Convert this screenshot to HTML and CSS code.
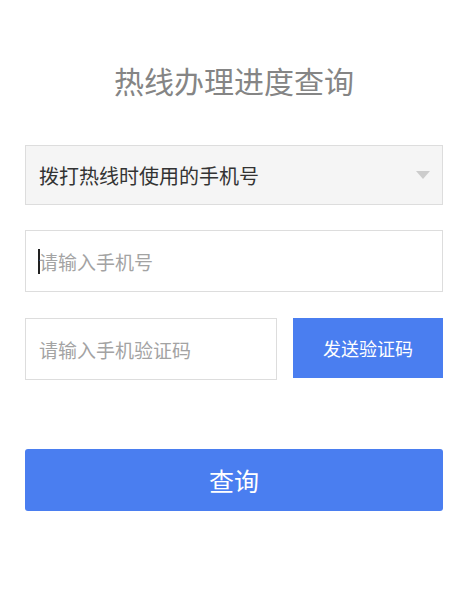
FILE: index.html
```html
<!DOCTYPE html>
<html lang="zh-CN">
<head>
<meta charset="utf-8">
<title>热线办理进度查询</title>
<link rel="stylesheet" href="styles.css">
</head>
<body>
<main class="page">
  <h1 class="title">热线办理进度查询</h1>
  <div class="field select">
    <span class="select-text">拨打热线时使用的手机号</span>
    <span class="arrow"></span>
  </div>
  <div class="field input phone">
    <span class="caret"></span><span class="placeholder">请输入手机号</span>
  </div>
  <div class="code-row">
    <div class="field input code">
      <span class="placeholder">请输入手机验证码</span>
    </div>
    <div class="send-btn">发送验证码</div>
  </div>
  <div class="query-btn">查询</div>
</main>
</body>
</html>
```

FILE: styles.css
```css
* { box-sizing: border-box; }
html, body {
  margin: 0;
  padding: 0;
  background: #fff;
}
body {
  font-family: "Noto Sans CJK SC", "Noto Sans", sans-serif;
}
.page {
  padding: 0 26px 0 25px;
  display: flex;
  flex-direction: column;
}
.title {
  margin: 60px 0 45px;
  height: 40px;
  line-height: 40px;
  font-size: 30px;
  font-weight: 400;
  color: #858585;
  text-align: center;
}
.field {
  border: 1px solid #dddddd;
  display: flex;
  align-items: center;
  padding-left: 13px;
}
.select {
  height: 60px;
  background: #f5f5f5;
  justify-content: space-between;
  padding-right: 12px;
}
.select-text {
  font-size: 20px;
  color: #333;
}
.arrow {
  width: 0;
  height: 0;
  border-left: 7.5px solid transparent;
  border-right: 7.5px solid transparent;
  border-top: 8px solid #cccccc;
}
.input {
  background: #fff;
}
.phone {
  margin-top: 25px;
  height: 62px;
}
.placeholder {
  font-size: 19px;
  color: #a3a3a3;
}
.caret {
  display: inline-block;
  width: 2px;
  height: 25px;
  background: #222;
  margin-right: -1px;
  margin-left: -1px;
}
.code-row {
  margin-top: 26px;
  display: flex;
  gap: 16px;
  align-items: flex-start;
}
.code {
  width: 252px;
  height: 62px;
}
.send-btn {
  flex: 1;
  height: 60px;
  background: #4a7ef0;
  color: #fff;
  font-size: 18px;
  display: flex;
  align-items: center;
  justify-content: center;
}
.query-btn {
  margin-top: 69px;
  height: 62px;
  background: #4a7ef0;
  border-radius: 3px;
  color: #fff;
  font-size: 25px;
  display: flex;
  align-items: center;
  justify-content: center;
}
```
